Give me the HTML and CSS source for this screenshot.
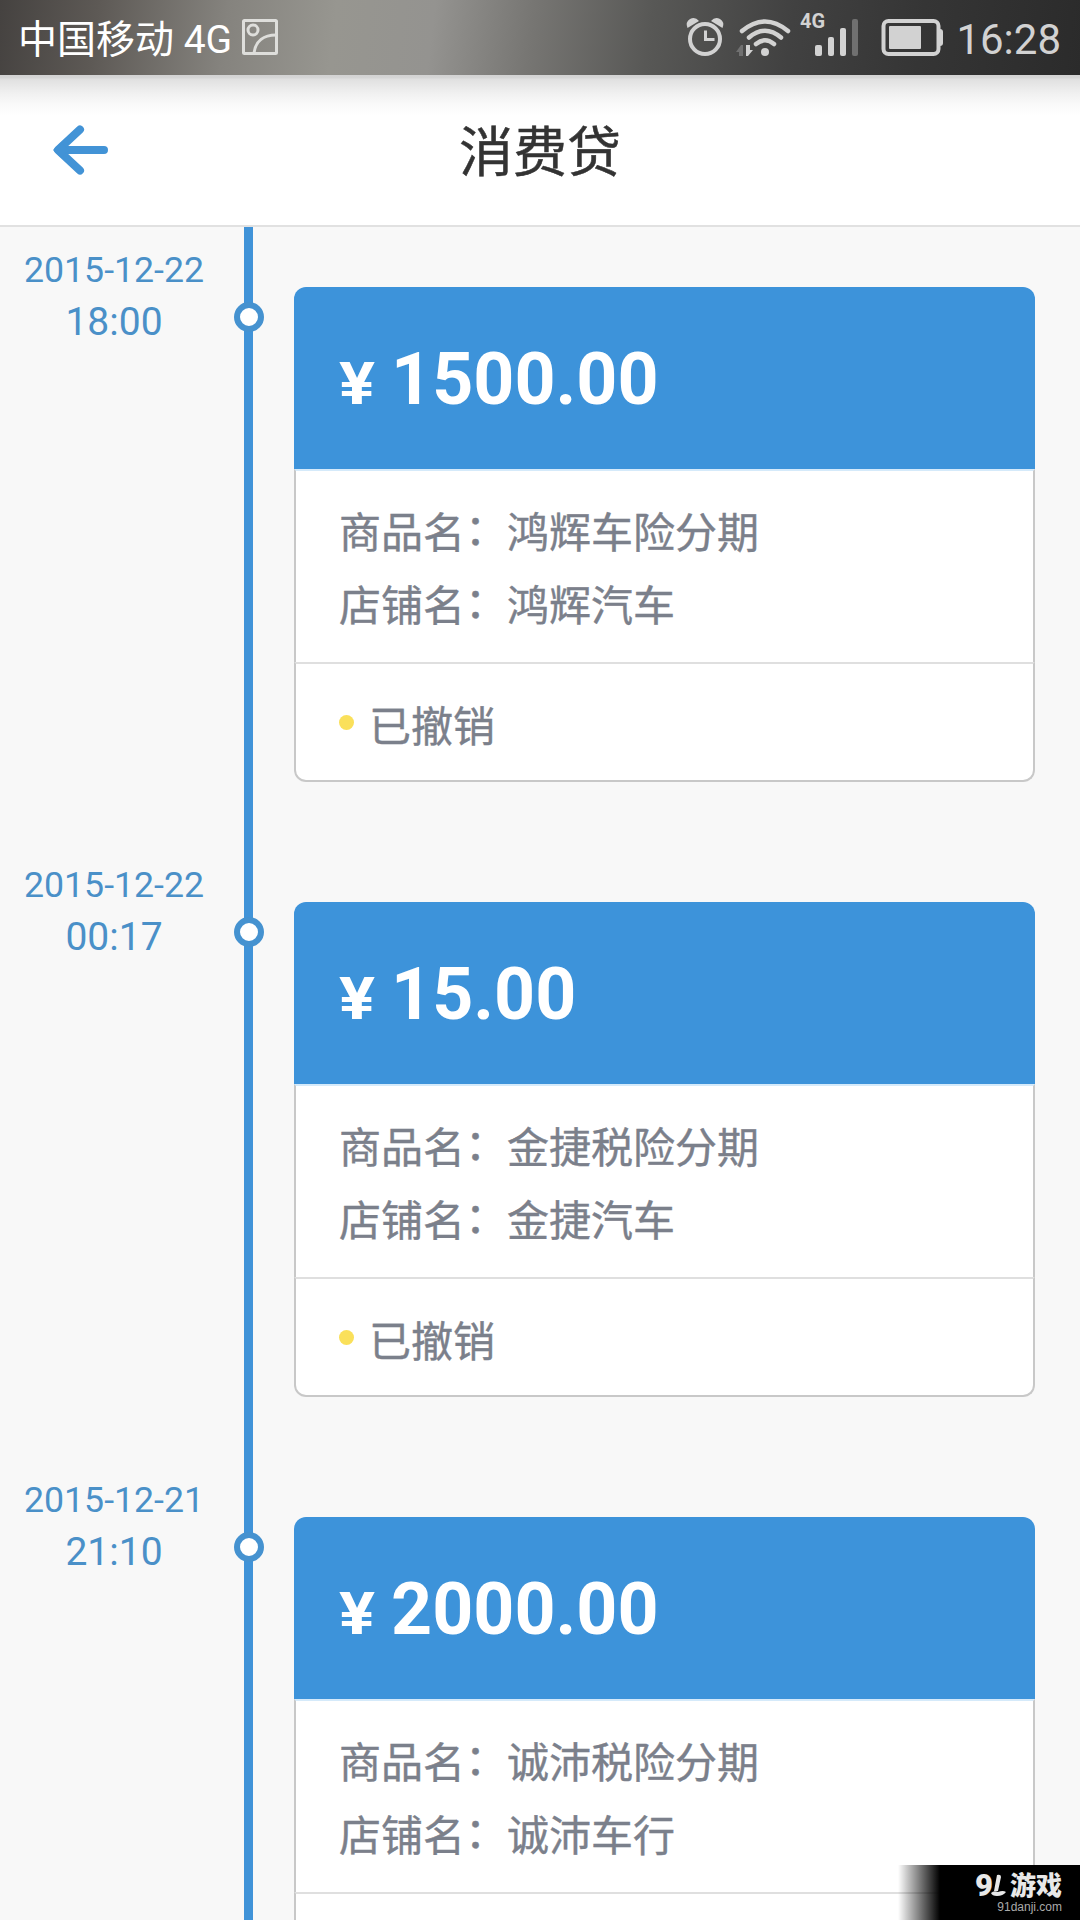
FILE: index.html
```html
<!DOCTYPE html>
<html lang="zh-CN">
<head>
    <meta charset="UTF-8">
    <meta name="viewport" content="width=device-width, initial-scale=1.0">
    <title>消费贷</title>
    <link rel="stylesheet" href="styles.css">
</head>

<body>
    <div class="status-bar">
        <div class="carrier">
            <span class="carrier-name">中国移动 4G</span>
            <svg class="icon-picture" width="36" height="36" viewBox="0 0 36 36">
                <rect x="1.5" y="1.5" width="33" height="33" rx="1"/>
                <circle cx="11" cy="11" r="5"/>
                <path d="M12 34C13.500 22 22 16 34 16"/>
            </svg>
        </div>
        <div class="indicators">
            <svg width="282" height="75" viewBox="0 0 282 75">
                <!-- alarm -->
                <g class="line">
                    <circle cx="43" cy="39" r="15" stroke-width="4"/>
                    <path d="M43.500 30.500V39.500H52.500" stroke-width="3"/>
                </g>
                <path class="fill" d="M25.500 28Q23 22 28 19Q33 16 37 21ZM60.500 28Q63 22 58 19Q53 16 49 21Z"/>
                <!-- wifi -->
                <g class="line round">
                    <path d="M80 31Q103 12 126 31" stroke-width="4.500"/>
                    <path d="M87 37.500Q103 24 119 37.500" stroke-width="4.500"/>
                    <path d="M94 44Q103 36.500 112 44" stroke-width="4.500"/>
                </g>
                <circle class="fill" cx="103" cy="52" r="4"/>
                <path class="dim" d="M74 52L79 45H81V56H77V52Z"/>
                <path class="fill" d="M84 45H88V50H91L86 56H84Z"/>
                <!-- signal -->
                <text class="net" x="138" y="28">4G</text>
                <rect class="fill" x="153" y="45" width="7" height="11" rx="2"/>
                <rect class="fill" x="166" y="37" width="6" height="19" rx="2"/>
                <rect class="fill" x="178" y="28" width="6" height="28" rx="2"/>
                <rect class="dim" x="190" y="19" width="6" height="37" rx="2"/>
                <!-- battery -->
                <rect class="line" x="221.500" y="21" width="55" height="33" rx="5" stroke-width="4"/>
                <rect class="fill" x="227" y="26" width="32" height="23" rx="1"/>
                <path class="fill" d="M278 29Q281 29 281 32V43Q281 46 278 46Z"/>
            </svg>
            <span class="clock">16:28</span>
        </div>
    </div>

    <header class="title-bar">
        <svg class="back" width="58" height="52" viewBox="0 0 58 52">
            <path d="M28 5.500L6 26L28 46.500M7 26H52"/>
            <path class="back-tip" d="M1 26L9 18.500L17 26L9 33.500Z"/>
        </svg>
        <h1>消费贷</h1>
    </header>

    <main class="timeline">
        <section class="entry">
            <div class="when">
                <div class="date">2015-12-22</div>
                <div class="time">18:00</div>
            </div>
            <div class="track"><span class="node"></span></div>
            <article class="card">
                <div class="amount"><span class="yen">¥</span>1500.00</div>
                <div class="detail">
                    <p>商品名<span class="colon">：</span>鸿辉车险分期</p>
                    <p>店铺名<span class="colon">：</span>鸿辉汽车</p>
                </div>
                <div class="state"><span class="dot"></span>已撤销</div>
            </article>
        </section>

        <section class="entry">
            <div class="when">
                <div class="date">2015-12-22</div>
                <div class="time">00:17</div>
            </div>
            <div class="track"><span class="node"></span></div>
            <article class="card">
                <div class="amount"><span class="yen">¥</span>15.00</div>
                <div class="detail">
                    <p>商品名<span class="colon">：</span>金捷税险分期</p>
                    <p>店铺名<span class="colon">：</span>金捷汽车</p>
                </div>
                <div class="state"><span class="dot"></span>已撤销</div>
            </article>
        </section>

        <section class="entry">
            <div class="when">
                <div class="date">2015-12-21</div>
                <div class="time">21:10</div>
            </div>
            <div class="track"><span class="node"></span></div>
            <article class="card">
                <div class="amount"><span class="yen">¥</span>2000.00</div>
                <div class="detail">
                    <p>商品名<span class="colon">：</span>诚沛税险分期</p>
                    <p>店铺名<span class="colon">：</span>诚沛车行</p>
                </div>
                <div class="state"></div>
            </article>
        </section>
    </main>

    <div class="watermark">
        <div class="brand">
            <span class="brand-num">9</span>
            <svg class="brand-one" width="15" height="23" viewBox="0 0 15 23">
                <path d="M6 1Q10 0 10 3L7 17H3Z"/>
                <path d="M0 19Q3 16 7 18Q12 16 15 18Q12 22 6 22Q1 22 0 19Z"/>
            </svg>
            <span class="brand-name">游戏</span>
        </div>
        <div class="site">91danji.com</div>
    </div>
</body>
</html>
```
FILE: styles.css
```css
* {
    box-sizing: border-box;
}
body {
    margin: 0;
    height: 1920px;
    display: flex;
    flex-direction: column;
    overflow: hidden;
    position: relative;
    background-color: #f8f8f8;
    font-family: Roboto, "Noto Sans CJK SC", sans-serif;
}

/* status bar */
.status-bar {
    flex: none;
    height: 75px;
    display: flex;
    justify-content: space-between;
    background: linear-gradient(97deg, #454240 0%, #5d5955 9%, #85837e 21%, #979690 31%, #949390 40%, #777673 49%, #585856 60%, #414141 73%, #353535 85%, #2b2b2b 100%);
}
.carrier {
    display: flex;
    align-items: flex-start;
    padding-left: 18px;
    color: #fff;
}
.carrier-name {
    width: 224px;
    font-size: 39px;
    line-height: 80px;
    white-space: nowrap;
}
.icon-picture {
    margin-top: 19px;
    fill: none;
    stroke: #dededb;
    stroke-width: 3;
}
.indicators {
    display: flex;
    padding-right: 19px;
}
.indicators svg {
    margin-right: 12px;
}
.line {
    fill: none;
    stroke: #d2d2d2;
}
.round {
    stroke-linecap: round;
}
.fill {
    fill: #d2d2d2;
}
.dim {
    fill: #707070;
}
.net {
    font-size: 20px;
    font-weight: bold;
    fill: #d2d2d2;
}
.clock {
    font-size: 42px;
    line-height: 79px;
    color: #d2d2d2;
}

/* title bar */
.title-bar {
    flex: none;
    height: 152px;
    display: grid;
    grid-template-columns: 130px 1fr 130px;
    align-items: center;
    border-bottom: 2px solid #e1e1e1;
    background: linear-gradient(#d3d3d3 0, #d6d6d6 3px, #e0e0e0 4px, #f0f0f0 18px, #fafafa 30px, #fff 40px);
}
.back {
    margin-left: 52px;
    fill: none;
    stroke: #4293d6;
    stroke-width: 8;
    stroke-linecap: round;
    stroke-linejoin: round;
}
.back-tip {
    fill: #4293d6;
    stroke: none;
}
h1 {
    margin: 0;
    padding-top: 8px;
    text-align: center;
    font-size: 54px;
    font-weight: normal;
    line-height: 80px;
    color: #333;
    -webkit-text-stroke: 0.5px #333;
}

/* timeline */
.timeline {
    flex: 1;
    min-height: 0;
    overflow: hidden;
}
.entry {
    display: grid;
    grid-template-columns: 230px 38px 26px 741px;
    height: 615px;
}
.when {
    padding: 21px 2px 0 0;
    text-align: center;
    color: #4a90c8;
}
.date {
    font-size: 35.7px;
    line-height: 44px;
}
.time {
    font-size: 39px;
    line-height: 60px;
}
.track {
    display: flex;
    justify-content: center;
    align-items: flex-start;
    padding-top: 75px;
    background: linear-gradient(#4093d8, #4093d8) 14px 0 / 9px 100% no-repeat;
}
.node {
    width: 30px;
    height: 30px;
    border: 6px solid #4592d0;
    border-radius: 50%;
    background-color: #fff;
}
.card {
    grid-column: 4;
    height: 495px;
    margin-top: 60px;
    border-radius: 12px;
    background-color: #fff;
}
.amount {
    height: 182px;
    padding-left: 45px;
    border-radius: 12px 12px 0 0;
    background-color: #3d93da;
    color: #fff;
    font-size: 71.7px;
    font-weight: bold;
    line-height: 186px;
}
.yen {
    display: inline-block;
    width: 52px;
    font-size: 60px;
    transform: scaleX(1.12);
    transform-origin: left;
}
.detail {
    height: 193px;
    padding: 26px 0 0 43px;
    border: solid #c8c8c8;
    border-width: 2px 2px 0;
    border-top-color: #d5eafa;
}
.detail p {
    margin: 0;
    line-height: 73px;
}
.colon {
    position: relative;
    top: -3px;
}
.detail,
.state {
    font-size: 42px;
    color: #7b808b;
    -webkit-text-stroke: 0.4px #7b808b;
}
.state {
    display: flex;
    align-items: center;
    height: 120px;
    padding: 2px 0 0 43px;
    border: 2px solid #c8c8c8;
    border-top-color: #dfdfdf;
    border-radius: 0 0 12px 12px;
}
.dot {
    width: 15px;
    height: 15px;
    margin: 0 15px 2px 0;
    border-radius: 50%;
    background-color: #fae05a;
}

/* site mark over the bottom corner */
.watermark {
    position: absolute;
    right: 0;
    bottom: 0;
    width: 182px;
    height: 55px;
    padding: 6px 18px 0 0;
    background: linear-gradient(to right, transparent, #000 42px);
    text-align: right;
}
.brand {
    display: flex;
    justify-content: flex-end;
    align-items: center;
    height: 29px;
    font-weight: 900;
    line-height: 28px;
    color: #e8e8e8;
}
.brand-num {
    font-size: 31px;
}
.brand-one {
    margin-right: 4px;
    margin-left: -2px;
    fill: #e8e8e8;
}
.brand-name {
    height: 28px;
    overflow: hidden;
    font-size: 26px;
}
.site {
    font-family: "Liberation Sans", Arial, sans-serif;
    font-size: 12px;
    line-height: 15px;
    color: #aaa;
}
```
